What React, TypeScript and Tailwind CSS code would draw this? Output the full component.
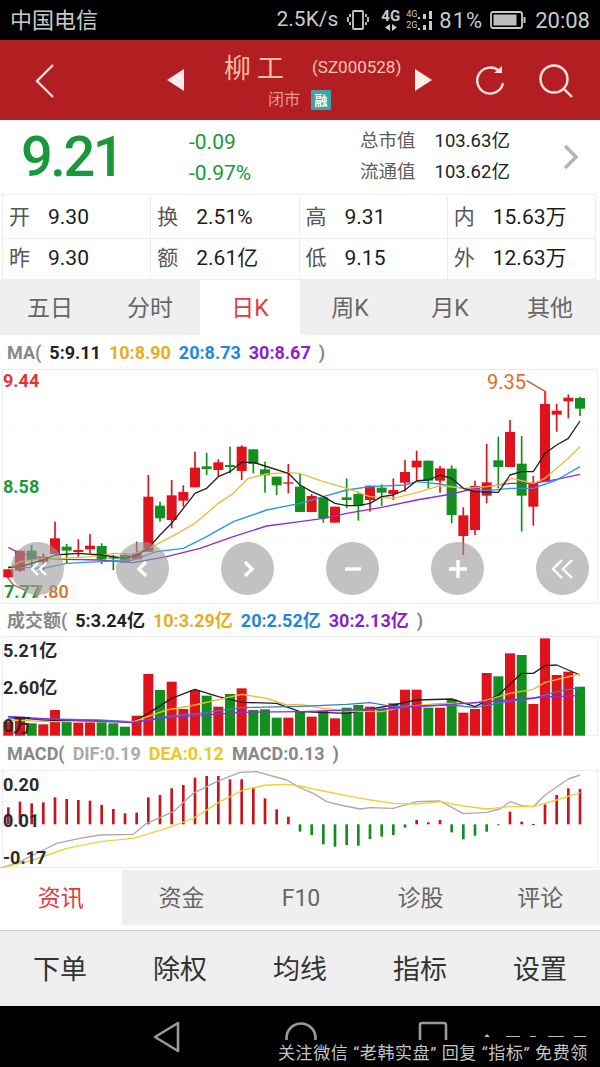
import type { ReactNode } from 'react'

type Candle = [string, number, number, number, number]

const RED = '#e0121c'
const GREEN = '#12901e'

// x position of candle i, in chart units (3 units = 1px)
const cx = (i: number) => 25 + i * 35

// colour, wick top, body top, body bottom, wick bottom
const candles: Candle[] = [
  ['r', 688, 688, 712, 716], ['r', 632, 632, 692, 696], ['g', 615, 632, 660, 680], ['r', 640, 650, 665, 690],
  ['r', 545, 595, 642, 642], ['g', 612, 620, 632, 672], ['r', 598, 630, 636, 650], ['r', 582, 617, 628, 640],
  ['g', 610, 618, 658, 672], ['g', 645, 652, 656, 690], ['g', 640, 645, 668, 668], ['r', 605, 640, 658, 658],
  ['r', 405, 470, 635, 635], ['g', 485, 497, 535, 545], ['r', 420, 466, 540, 565], ['r', 436, 456, 482, 500],
  ['r', 335, 383, 442, 442], ['g', 338, 379, 387, 405], ['r', 358, 367, 390, 410], ['g', 320, 375, 381, 400],
  ['r', 316, 320, 393, 420], ['g', 328, 328, 372, 400], ['g', 365, 388, 406, 458], ['g', 410, 410, 436, 465],
  ['r', 372, 427, 431, 460], ['g', 400, 440, 516, 516], ['r', 462, 468, 516, 516], ['g', 472, 472, 535, 548],
  ['r', 500, 500, 548, 548], ['g', 415, 472, 480, 505], ['g', 455, 462, 497, 542], ['r', 437, 437, 480, 515],
  ['g', 433, 443, 458, 498], ['r', 415, 450, 462, 480], ['r', 360, 396, 428, 455], ['r', 332, 362, 382, 420],
  ['g', 362, 362, 422, 445], ['r', 378, 385, 422, 458], ['g', 376, 386, 525, 550], ['r', 502, 526, 588, 645],
  ['r', 422, 438, 570, 585], ['r', 312, 427, 467, 490], ['g', 290, 361, 381, 445], ['r', 240, 276, 381, 381],
  ['g', 288, 371, 467, 575], ['r', 408, 427, 500, 557], ['r', 155, 192, 425, 425], ['r', 192, 212, 224, 275],
  ['r', 163, 173, 184, 235], ['g', 170, 174, 206, 228],
]

const volumes = [
  350, 335, 355, 358, 315, 345, 353, 352, 352, 355, 365, 332, 207, 255, 230, 312, 255, 272, 305, 267, 250, 315, 313,
  338, 338, 320, 335, 318, 340, 308, 300, 305, 312, 295, 254, 254, 308, 308, 283, 323, 312, 204, 214, 145, 150, 297,
  100, 210, 200, 245,
]

const macd = [
  607, 590, 595, 592, 577, 582, 585, 587, 600, 612, 625, 623, 577, 570, 550, 540, 518, 513, 513, 523, 523, 548, 580,
  613, 635, 680, 690, 718, 725, 720, 722, 702, 695, 690, 668, 645, 652, 645, 682, 703, 692, 680, 660, 620, 650, 657,
  598, 570, 550, 552,
]

const pts = (a: number[][]) => a.map(([x, y]) => `${x},${y}`).join(' ')

const maLines: [string, number[][]][] = [
  ['#8a2fd6', [[25, 622], [60, 640], [130, 655], [200, 658], [300, 660], [400, 668], [500, 650], [600, 625], [700, 590], [800, 558], [900, 545], [970, 535], [1040, 520], [1145, 502], [1250, 480], [1355, 462], [1425, 445], [1530, 430], [1600, 430], [1670, 418], [1740, 403]]],
  ['#2f95dc', [[25, 680], [130, 685], [200, 670], [300, 665], [400, 660], [470, 635], [550, 625], [620, 590], [700, 545], [800, 510], [900, 490], [970, 470], [1040, 450], [1110, 440], [1215, 435], [1250, 425], [1320, 432], [1390, 445], [1460, 452], [1530, 445], [1600, 445], [1670, 420], [1740, 380]]],
  ['#eebb3c', [[25, 685], [60, 665], [130, 655], [200, 655], [270, 650], [340, 640], [400, 642], [445, 625], [515, 590], [585, 550], [655, 490], [700, 460], [745, 415], [800, 402], [865, 398], [900, 400], [970, 425], [1040, 445], [1110, 470], [1180, 475], [1250, 458], [1320, 437], [1390, 445], [1460, 440], [1500, 435], [1535, 415], [1600, 430], [1635, 415], [1670, 385], [1705, 355], [1740, 320]]],
  ['#222222', [[25, 683], [60, 680], [130, 660], [165, 645], [235, 640], [305, 645], [375, 655], [410, 645], [445, 625], [480, 585], [515, 550], [550, 505], [585, 460], [620, 445], [655, 410], [690, 395], [725, 367], [760, 367], [795, 378], [865, 400], [900, 435], [935, 455], [970, 470], [1005, 490], [1040, 497], [1075, 497], [1110, 490], [1145, 470], [1180, 465], [1215, 450], [1250, 422], [1285, 420], [1320, 405], [1355, 415], [1390, 445], [1425, 455], [1495, 457], [1530, 405], [1565, 395], [1600, 395], [1635, 340], [1670, 315], [1705, 295], [1740, 243]]],
]

const volLines: [string, number[][]][] = [
  ['#222222', [[25, 335], [130, 345], [270, 347], [400, 350], [445, 325], [515, 280], [585, 253], [655, 275], [725, 292], [830, 295], [900, 320], [1040, 325], [1180, 300], [1250, 285], [1355, 282], [1425, 305], [1495, 270], [1565, 205], [1600, 205], [1635, 182], [1670, 180], [1740, 210]]],
  ['#f2b632', [[25, 345], [150, 350], [400, 350], [500, 315], [585, 300], [725, 268], [800, 280], [860, 300], [900, 298], [970, 310], [1040, 318], [1145, 320], [1215, 305], [1320, 295], [1425, 295], [1530, 265], [1600, 253], [1635, 232], [1740, 207]]],
  ['#2f7fd6', [[25, 340], [300, 345], [400, 352], [500, 335], [600, 325], [725, 308], [900, 304], [1040, 298], [1110, 293], [1180, 305], [1355, 300], [1425, 308], [1530, 288], [1600, 280], [1670, 260], [1740, 248]]],
  ['#8a2fd6', [[25, 335], [200, 345], [400, 353], [500, 338], [725, 322], [900, 320], [1145, 312], [1355, 298], [1530, 285], [1635, 276], [1740, 272]]],
]

const macdLines: [string, number[][]][] = [
  ['#aaaaaa', [[0, 790], [60, 770], [130, 735], [170, 715], [240, 700], [300, 690], [400, 688], [440, 655], [520, 620], [580, 565], [650, 530], [720, 502], [770, 500], [860, 525], [900, 548], [940, 565], [980, 590], [1020, 600], [1080, 612], [1110, 608], [1180, 610], [1250, 590], [1320, 588], [1390, 626], [1460, 622], [1500, 612], [1530, 590], [1565, 602], [1600, 605], [1635, 570], [1705, 522], [1740, 510]]],
  ['#ecd238', [[0, 790], [100, 765], [200, 730], [300, 710], [400, 700], [500, 670], [580, 640], [660, 590], [730, 555], [800, 540], [860, 538], [900, 543], [970, 558], [1040, 572], [1110, 585], [1180, 595], [1250, 597], [1320, 590], [1390, 603], [1460, 612], [1530, 605], [1600, 605], [1670, 585], [1740, 563]]],
]

function Line({ color, points, width = 4 }: { color: string; points: number[][]; width?: number }) {
  return <polyline points={pts(points)} fill="none" stroke={color} strokeWidth={width} strokeLinejoin="round" />
}

function RoundBtn({ left, children }: { left: number; children: ReactNode }) {
  return (
    <div
      className="absolute top-[172px] w-[53px] h-[53px] rounded-full bg-[#9a9a9a]/60 flex items-center justify-center"
      style={{ left }}
    >
      <svg width="28" height="28" viewBox="0 0 28 28" fill="none" stroke="#fff" strokeWidth="3.4">
        {children}
      </svg>
    </div>
  )
}

function Legend({ items, height }: { items: [string, string][]; height: string }) {
  return (
    <div className={`flex items-center gap-[8px] pl-[7px] pt-[1px] font-bold text-[18px] bg-white ${height}`}>
      {items.map(([t, c], i) => (
        <span key={i} style={{ color: c }} className="whitespace-nowrap">{t}</span>
      ))}
    </div>
  )
}

function Cell({ label, value, last }: { label: string; value: string; last?: boolean }) {
  return (
    <div className={`flex-1 flex items-center pl-[6px] gap-[18px] ${last ? '' : 'border-r border-[#ececec]'}`}>
      <span className="text-[21px] text-[#555]">{label}</span>
      <span className="text-[21px] text-[#1c1c1c]">{value}</span>
    </div>
  )
}

export default function App() {
  return (
    <div className="w-[600px] h-[1067px] overflow-hidden bg-white font-['Roboto','Noto_Sans_CJK_SC',sans-serif]">
      {/* status bar */}
      <div className="h-[40px] bg-black flex items-center justify-between pl-[10px] pr-[10px] text-[#c9c9c9]">
        <span className="text-[22px]">中国电信</span>
        <div className="flex items-center text-[21px]">
          <span>2.5K/s</span>
          <svg className="ml-[9px]" width="22" height="22" viewBox="0 0 22 22" fill="none" stroke="#c9c9c9" strokeWidth="1.8">
            <rect x="6" y="2" width="10" height="18" rx="1" />
            <path d="M3 5v3M1 8v5M3 13v3M19 5v3M21 8v5M19 13v3" />
          </svg>
          <div className="ml-[12px] flex flex-col items-center leading-none text-[15px] font-bold">
            <span>4G</span>
            <svg width="14" height="7" viewBox="0 0 14 7" fill="#c9c9c9"><path d="M6 0v7L1 3.5zM8 0l5 3.5L8 7z" /></svg>
          </div>
          <div className="ml-[6px] flex flex-col leading-[11px] text-[9px]">
            <span>4G</span>
            <span>2G</span>
          </div>
          <svg width="17" height="24" viewBox="0 0 17 24" fill="#c9c9c9">
            <path d="M1 9h2v2H1zM6 6h3v5H6zM12 3h3v8h-3zM1 20h2v2H1zM6 17h3v5H6zM12 13h3v9h-3z" />
          </svg>
          <span className="ml-[5px] text-[22px] tracking-[1px]">81%</span>
          <svg className="ml-[7px]" width="36" height="20" viewBox="0 0 36 20" fill="none">
            <rect x="1" y="2" width="31" height="16" rx="2" stroke="#c9c9c9" strokeWidth="1.8" />
            <rect x="3.5" y="4.5" width="23" height="11" fill="#bdbdbd" />
            <rect x="33.5" y="7" width="2" height="6" fill="#c9c9c9" />
          </svg>
          <span className="ml-[9px] text-[22px]">20:08</span>
        </div>
      </div>

      {/* title bar */}
      <div className="relative h-[80px] bg-[#b31e22] flex">
        <div className="w-[150px] flex items-center pl-[33px] pt-[1px]">
          <svg width="24" height="36" viewBox="0 0 24 36" fill="none" stroke="#f5dcd6" strokeWidth="2.4">
            <path d="M20 2 L4 18 L20 34" />
          </svg>
        </div>
        <div className="w-[300px] flex items-center">
          <svg className="ml-[16px]" width="20" height="24" viewBox="0 0 20 24" fill="#fbeeea"><path d="M18 1v22L1 12z" /></svg>
          <div className="flex-1 flex flex-col">
            <div className="flex items-center h-[44px] pt-[2px] pl-[38px]">
              <span className="text-[27px] tracking-[6px] text-[#f6bd9f] leading-none">柳工</span>
              <span className="ml-[22px] mb-[2px] text-[17px] text-[#f3c6b8] whitespace-nowrap">(SZ000528)</span>
            </div>
            <div className="flex items-center gap-[11px] pl-[82px] mb-[4px]">
              <span className="text-[16px] text-[#e99b97] leading-none">闭市</span>
              <span className="w-[20px] h-[20px] bg-[#38a7a9] text-white text-[13px] font-bold flex items-center justify-center leading-none">融</span>
            </div>
          </div>
          <svg className="mr-[17px]" width="20" height="24" viewBox="0 0 20 24" fill="#fbeeea"><path d="M2 1v22l17-11z" /></svg>
        </div>
        <div className="flex-1 flex items-center pl-[23px] gap-[30px] pt-[1px]">
          <svg width="34" height="34" viewBox="0 0 34 34" fill="none" stroke="#f5e3de" strokeWidth="2.4">
            <path d="M27 8 A13 13 0 1 0 30 19" />
            <path d="M21 9 L29 9 L29 2" strokeWidth="0" fill="#f5e3de" />
          </svg>
          <svg width="38" height="38" viewBox="0 0 38 38" fill="none" stroke="#f5e3de" strokeWidth="2.4">
            <circle cx="17" cy="17" r="13.5" />
            <path d="M27 27 L35 35" />
          </svg>
        </div>
      </div>

      {/* price summary */}
      <div className="h-[74px] flex items-center">
        <div className="w-[189px] pl-[21px] text-[56px] leading-none font-medium text-[#18983a] tracking-[-2.5px]">9.21</div>
        <div className="w-[171px] flex flex-col gap-[8px] pt-[2px] text-[21px] leading-[23px] text-[#18983a]">
          <span>-0.09</span>
          <span>-0.97%</span>
        </div>
        <div className="w-[203px] flex flex-col gap-[8px] text-[18.5px] leading-[23px]">
          <div className="flex gap-[19px]"><span className="text-[#5c5c5c]">总市值</span><span className="text-[#222]">103.63亿</span></div>
          <div className="flex gap-[19px]"><span className="text-[#5c5c5c]">流通值</span><span className="text-[#222]">103.62亿</span></div>
        </div>
        <svg width="16" height="28" viewBox="0 0 16 28" fill="none" stroke="#b5b5b5" strokeWidth="3.6"><path d="M2 3 L13 14 L2 25" /></svg>
      </div>

      {/* quote table */}
      <div className="mx-[2px] w-[594px] h-[86px] border border-[#ececec] flex flex-col">
        <div className="flex-1 flex border-b border-[#ececec] pt-[2px]">
          <Cell label="开" value="9.30" />
          <Cell label="换" value="2.51%" />
          <Cell label="高" value="9.31" />
          <Cell label="内" value="15.63万" last />
        </div>
        <div className="flex-1 flex">
          <Cell label="昨" value="9.30" />
          <Cell label="额" value="2.61亿" />
          <Cell label="低" value="9.15" />
          <Cell label="外" value="12.63万" last />
        </div>
      </div>

      {/* period tabs */}
      <div className="h-[55px] flex bg-[#efefef] text-[23px] text-[#666]">
        {['五日', '分时', '日K', '周K', '月K', '其他'].map((t) => (
          <div key={t} className={`w-[100px] flex items-center justify-center pt-[3px] ${t === '日K' ? 'bg-white text-[#e23b3f]' : ''}`}>{t}</div>
        ))}
      </div>

      {/* K line */}
      <Legend
        height="h-[34px]"
        items={[['MA(', '#888'], ['5:9.11', '#222'], ['10:8.90', '#e8ad1d'], ['20:8.73', '#1e88d8'], ['30:8.67', '#8a1fd1'], [')', '#888']]}
      />
      <div className="relative h-[235px] mx-[2px] border border-[#ececec]">
        <svg className="absolute left-[-3px] top-[-1px]" width="600" height="235" viewBox="0 87 1800 705">
          {[260, 435, 610].map((y) => <line key={y} x1="9" x2="1785" y1={y} y2={y} stroke="#f8f8f8" strokeWidth="3" strokeDasharray="9 9" />)}
          {candles.map(([c, hi, top, bot, lo], i) => (
            <g key={i} fill={c === 'r' ? RED : GREEN}>
              <rect x={cx(i) - 2.5} y={hi} width="5" height={lo - hi} />
              <rect x={cx(i) - 15} y={top} width="30" height={bot - top} />
            </g>
          ))}
          {maLines.map(([c, p]) => <Line key={c} color={c} points={p} />)}
          <polyline points="1580,122 1637,155 1637,192" fill="none" stroke="#c8552a" strokeWidth="4" />
          <polyline points="22,712 40,735 80,752" fill="none" stroke="#c8552a" strokeWidth="4" />
        </svg>
        <span className="absolute left-[0px] top-[0px] text-[18px] font-bold leading-[22px] text-[#e0343a]">9.44</span>
        <span className="absolute left-[0px] top-[106px] text-[18px] font-bold leading-[22px] text-[#1a9a3c]">8.58</span>
        <span className="absolute left-[1px] top-[211px] text-[18px] font-bold leading-[22px] text-[#1a9a3c]">7.77</span>
        <span className="absolute left-[30px] top-[211px] text-[18px] font-medium leading-[22px] text-[#d9701f]">7.80</span>
        <span className="absolute left-[484px] top-[0px] text-[20px] leading-[24px] text-[#e8691f]">9.35</span>
        <RoundBtn left={8}><path d="M14 8 L8 14 L14 20M22 8 L16 14 L22 20" strokeWidth="2.4" /></RoundBtn>
        <RoundBtn left={113}><path d="M17 7 L10 14 L17 21" /></RoundBtn>
        <RoundBtn left={218}><path d="M11 7 L18 14 L11 21" /></RoundBtn>
        <RoundBtn left={323}><path d="M6 14 H22" /></RoundBtn>
        <RoundBtn left={428}><path d="M5 14 H23 M14 5 V23" /></RoundBtn>
        <RoundBtn left={533}><path d="M13 5 L4 14 L13 23M23 5 L14 14 L23 23" strokeWidth="2.4" /></RoundBtn>
      </div>

      {/* turnover */}
      <Legend
        height="h-[32px]"
        items={[['成交额(', '#888'], ['5:3.24亿', '#222'], ['10:3.29亿', '#e8ad1d'], ['20:2.52亿', '#1e88d8'], ['30:2.13亿', '#8a1fd1'], [')', '#888']]}
      />
      <div className="relative h-[100px] mx-[2px] border border-[#ececec]">
        <svg className="absolute left-[-3px] top-[-1px]" width="600" height="100" viewBox="0 93 1800 300">
          {volumes.map((top, i) => (
            <rect key={i} x={cx(i) - 15} y={top} width="30" height={392 - top} fill={candles[i][0] === 'r' ? RED : GREEN} />
          ))}
          {volLines.map(([c, p]) => <Line key={c} color={c} points={p} />)}
        </svg>
        <span className="absolute left-[0px] top-[3px] text-[18px] font-bold leading-[22px] text-[#2a2a2a]">5.21亿</span>
        <span className="absolute left-[0px] top-[40px] text-[18px] font-bold leading-[22px] text-[#2a2a2a]">2.60亿</span>
        <span className="absolute left-[0px] top-[78px] text-[18px] font-bold leading-[22px] text-[#2a2a2a]">0万</span>
      </div>

      {/* MACD */}
      <Legend
        height="h-[34px]"
        items={[['MACD(', '#888'], ['DIF:0.19', '#aaa'], ['DEA:0.12', '#ecc81f'], ['MACD:0.13', '#888'], [')', '#888']]}
      />
      <div className="relative h-[98px] mx-[2px] border border-[#ececec]">
        <svg className="absolute left-[-3px] top-[-1px]" width="600" height="98" viewBox="0 495 1800 294">
          {macd.map((v, i) => {
            const up = v < 658
            return <rect key={i} x={cx(i) - 4} y={Math.min(v, 658)} width="8" height={Math.max(Math.abs(v - 658), 3)} fill={up ? '#c9141f' : GREEN} />
          })}
          {macdLines.map(([c, p]) => <Line key={c} color={c} points={p} />)}
        </svg>
        <span className="absolute left-[0px] top-[3px] text-[18px] font-bold leading-[22px] text-[#2a2a2a]">0.20</span>
        <span className="absolute left-[0px] top-[39px] text-[18px] font-bold leading-[22px] text-[#2a2a2a]">0.01</span>
        <span className="absolute left-[0px] top-[76px] text-[18px] font-bold leading-[22px] text-[#2a2a2a]">-0.17</span>
      </div>

      {/* news tabs */}
      <div className="mt-[2px] h-[55px] flex bg-[#efefef] text-[23px] text-[#666]">
        {['资讯', '资金', 'F10', '诊股', '评论'].map((t, i) => (
          <div key={t} className={`flex items-center justify-center pt-[3px] ${i === 0 ? 'w-[122px] bg-white text-[#e23b3f]' : 'w-[120px]'}`}>{t}</div>
        ))}
      </div>

      {/* toolbar */}
      <div className="mt-[5px] h-[76px] border-t border-[#cfcfcf] bg-[#eeeeee] flex text-[27px] text-[#333]">
        {['下单', '除权', '均线', '指标', '设置'].map((t) => (
          <div key={t} className="w-[120px] flex items-center justify-center pt-[4px]">{t}</div>
        ))}
      </div>

      {/* nav bar */}
      <div className="relative h-[61px] bg-black overflow-hidden">
        <div className="flex pl-[152px] pt-[15px]">
          <svg width="30" height="32" viewBox="0 0 30 32" fill="none" stroke="#9a9a9a" strokeWidth="2.6" className="shrink-0">
            <path d="M26 2 V30 L3 16 Z" strokeLinejoin="round" />
          </svg>
          <svg width="34" height="34" viewBox="0 0 34 34" fill="none" stroke="#9a9a9a" strokeWidth="2.6" className="shrink-0 ml-[102px]">
            <circle cx="17" cy="17" r="14.5" />
          </svg>
          <svg width="30" height="34" viewBox="0 0 30 34" fill="none" stroke="#9a9a9a" strokeWidth="2.6" className="shrink-0 ml-[100px]">
            <rect x="2" y="2" width="26" height="30" rx="2" />
          </svg>
        </div>
        {/* watermark strip pasted over the nav keys */}
        <div className="absolute left-[270px] right-0 top-[34px] bottom-0 bg-black">
          <span className="absolute left-[8px] top-[2px] text-[17px] tracking-[0.6px] leading-[22px] whitespace-nowrap text-[#c4c4c4]">关注微信 “老韩实盘” 回复 “指标” 免费领</span>
        </div>
        <svg className="absolute left-[480px] top-[27px]" width="112" height="6" viewBox="0 0 112 6" fill="#bbb">
          <path d="M4 4l3-3 3 3zM26 3h14v1H26zM50 3h6v1h-6zM68 3h16v1H68zM94 3h12v1H94z" />
        </svg>
      </div>
    </div>
  )
}
